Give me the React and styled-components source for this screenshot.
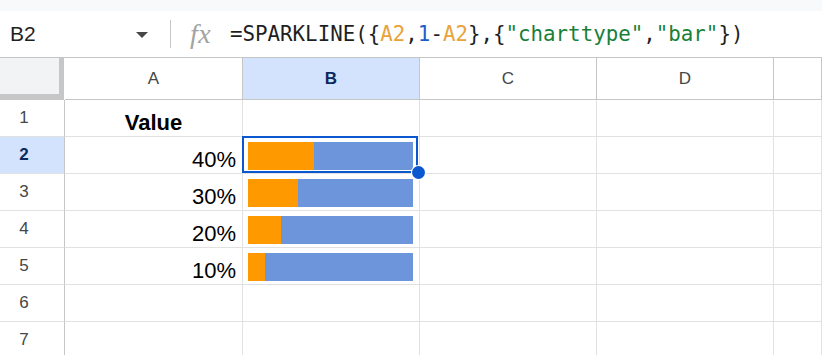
import React from "react";
import styled, { createGlobalStyle } from "styled-components";

const Global = createGlobalStyle`
  html, body { margin: 0; padding: 0; background: #fff; }
  body { font-family: "Liberation Sans", Arial, sans-serif; overflow: hidden; }
`;

const Page = styled.div`
  width: 822px;
  height: 355px;
  overflow: hidden;
  display: flex;
  flex-direction: column;
`;

const TopStrip = styled.div`
  height: 11px;
  background: #f8f9fa;
  flex: none;
`;

const FormulaBar = styled.div`
  height: 47px;
  flex: none;
  box-sizing: border-box;
  border-bottom: 1px solid #c4c7c5;
  display: flex;
  align-items: center;
  background: #fff;
`;

const NameBox = styled.div`
  width: 170px;
  box-sizing: border-box;
  padding-left: 10px;
  padding-right: 22px;
  display: flex;
  align-items: center;
  justify-content: space-between;
  font-size: 21px;
  color: #1f1f1f;
`;

const Caret = styled.span`
  width: 0;
  height: 0;
  border-left: 6px solid transparent;
  border-right: 6px solid transparent;
  border-top: 6px solid #444746;
  margin-top: 2px;
`;

const Divider = styled.div`
  width: 1px;
  height: 28px;
  background: #c4c7c5;
`;

const Fx = styled.span`
  font-family: "Liberation Serif", "Times New Roman", serif;
  font-style: italic;
  font-size: 28px;
  color: #a3a3a3;
  margin-left: 19px;
  width: 40px;
  letter-spacing: 0.5px;
  line-height: 1;
`;

const Formula = styled.div`
  font-family: "DejaVu Sans Mono", "Liberation Mono", monospace;
  font-size: 20.8px;
  color: #1f1f1f;
  white-space: pre;
`;

const Tok = styled.span`
  color: ${(p) => p.$c};
`;

const Grid = styled.div`
  display: grid;
  grid-template-columns: 65px 178px 177px 177px 177px 1fr;
  grid-template-rows: 42px repeat(7, 37px);
  flex: none;
`;

const Corner = styled.div`
  background: #f1f3f4;
  box-sizing: border-box;
  box-shadow: inset -5px 0 0 #c7c7c7, inset 0 -6px 0 #c7c7c7;
  border-right: 1px solid #fff;
`;

const ColHead = styled.div`
  box-sizing: border-box;
  border-right: 1px solid #c4c7c5;
  border-bottom: 1px solid #c4c7c5;
  background: ${(p) => (p.$active ? "#d3e3fd" : "#fff")};
  color: ${(p) => (p.$active ? "#0b2a5c" : "#444746")};
  font-weight: ${(p) => (p.$active ? 700 : 400)};
  font-size: 17px;
  display: flex;
  align-items: center;
  justify-content: center;
`;

const RowHead = styled.div`
  box-sizing: border-box;
  border-right: 1px solid #c4c7c5;
  border-bottom: 1px solid #e1e1e1;
  background: ${(p) => (p.$active ? "#d3e3fd" : "#fff")};
  color: ${(p) => (p.$active ? "#0b2a5c" : "#444746")};
  font-weight: ${(p) => (p.$active ? 700 : 400)};
  font-size: 17px;
  display: flex;
  align-items: center;
  justify-content: center;
  padding-right: 16px;
`;

const Cell = styled.div`
  position: relative;
  box-sizing: border-box;
  border-right: 1px solid #e1e1e1;
  border-bottom: 1px solid #e1e1e1;
  display: flex;
  align-items: flex-end;
  justify-content: ${(p) => p.$align || "flex-start"};
  padding: 0 6px 2px 6px;
  font-size: 22px;
  line-height: 23px;
  color: #000;
  font-weight: ${(p) => (p.$bold ? 700 : 400)};
`;

const BarCell = styled.div`
  position: relative;
  box-sizing: border-box;
  border-right: 1px solid #e1e1e1;
  border-bottom: 1px solid #e1e1e1;
  padding: 5px 6px 3px 5px;
  display: flex;
`;

const Bar = styled.div`
  flex: 1;
  display: flex;
  background: #6d95db;
`;

const BarFill = styled.div`
  background: #ff9900;
  height: 100%;
`;

const Selection = styled.div`
  position: absolute;
  z-index: 3;
  top: -1px;
  left: -1px;
  right: 1px;
  bottom: 0;
  border: 2px solid #0b57d0;
  pointer-events: none;
`;

const Handle = styled.div`
  position: absolute;
  right: -9px;
  bottom: -8px;
  width: 13px;
  height: 13px;
  border-radius: 50%;
  background: #0b57d0;
  box-shadow: 0 0 0 1px #fff;
`;

const cols = ["A", "B", "C", "D", ""];
const data = [null, 0.4, 0.3, 0.2, 0.1, null, null];

export default function App() {
  return (
    <Page>
      <Global />
      <TopStrip />
      <FormulaBar>
        <NameBox>
          <span>B2</span>
          <Caret />
        </NameBox>
        <Divider />
        <Fx>fx</Fx>
        <Formula>
          =SPARKLINE({"{"}
          <Tok $c="#e8a33a">A2</Tok>,<Tok $c="#1a5fc7">1</Tok>-
          <Tok $c="#e8a33a">A2</Tok>
          {"},{"}
          <Tok $c="#188038">"charttype"</Tok>,<Tok $c="#188038">"bar"</Tok>
          {"})"}
        </Formula>
      </FormulaBar>
      <Grid>
        <Corner />
        {cols.map((c, i) => (
          <ColHead key={i} $active={c === "B"}>
            {c}
          </ColHead>
        ))}
        {data.map((v, r) => (
          <React.Fragment key={r}>
            <RowHead $active={r === 1}>{r + 1}</RowHead>
            {r === 0 ? (
              <Cell $align="center" $bold>
                Value
              </Cell>
            ) : (
              <Cell $align="flex-end">{v != null ? `${Math.round(v * 100)}%` : ""}</Cell>
            )}
            {v != null ? (
              <BarCell>
                <Bar>
                  <BarFill style={{ width: `${v * 100}%` }} />
                </Bar>
                {r === 1 && (
                  <Selection>
                    <Handle />
                  </Selection>
                )}
              </BarCell>
            ) : (
              <Cell />
            )}
            <Cell />
            <Cell />
            <Cell />
          </React.Fragment>
        ))}
      </Grid>
    </Page>
  );
}
